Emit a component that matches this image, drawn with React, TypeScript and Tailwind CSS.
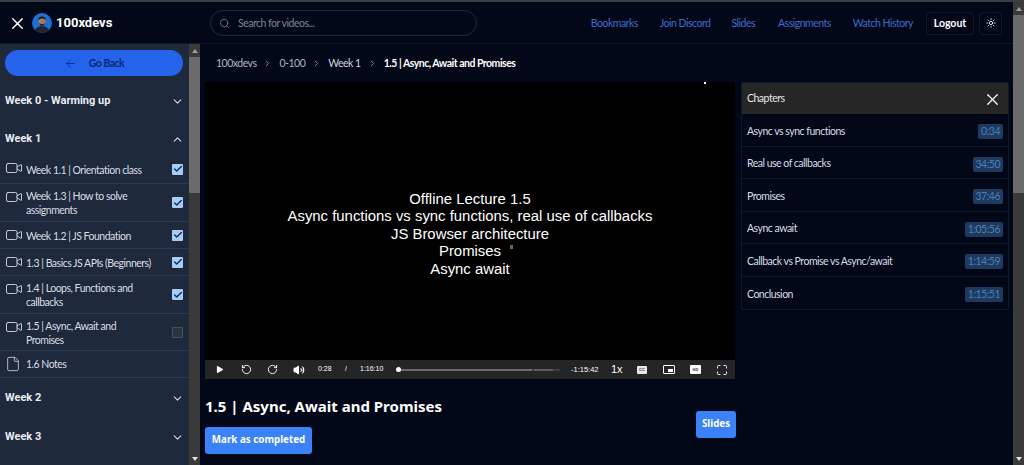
import { ArrowLeft, Check, ChevronDown, ChevronRight, ChevronUp, File, Maximize, Play, RotateCcw, RotateCw, Search, Sun, Video, Volume2, X } from 'lucide-react';

const lessons = [
  { title: 'Week 1.1 | Orientation class', done: true, h: 'h-[29px]' },
  { title: 'Week 1.3 | How to solve assignments', done: true, h: 'h-[38px]' },
  { title: 'Week 1.2 | JS Foundation', done: true, h: 'h-[27px]' },
  { title: '1.3 | Basics JS APIs (Beginners)', done: true, h: 'h-[27px]' },
  { title: '1.4 | Loops, Functions and callbacks', done: true, h: 'h-[38px]' },
  { title: '1.5 | Async, Await and Promises', done: false, h: 'h-[37px]' },
];

const chapters = [
  ['Async vs sync functions', '0:34'],
  ['Real use of callbacks', '34:50'],
  ['Promises', '37:46'],
  ['Async await', '1:05:56'],
  ['Callback vs Promise vs Async/await', '1:14:59'],
  ['Conclusion', '1:15:51'],
];

function Scrollbar({ thumb }: { thumb: string }) {
  return (
    <div className="w-[11px] shrink-0 bg-[#3a3a3a] flex flex-col items-center">
      <div className="h-[13px] flex items-center justify-center">
        <div className="w-0 h-0 border-x-[3px] border-x-transparent border-b-[4px] border-b-[#a0a0a0]" />
      </div>
      <div className={`w-full bg-[#6b6b6b] ${thumb}`} />
      <div className="flex-1" />
      <div className="h-[13px] flex items-center justify-center">
        <div className="w-0 h-0 border-x-[3px] border-x-transparent border-t-[4px] border-t-[#e0e0e0]" />
      </div>
    </div>
  );
}

function Avatar() {
  return (
    <svg width="20" height="20" viewBox="0 0 20 20" className="shrink-0">
      <defs>
        <clipPath id="av"><circle cx="10" cy="10" r="10" /></clipPath>
      </defs>
      <g clipPath="url(#av)">
        <rect width="20" height="20" fill="#1d6fd1" />
        <path d="M2 20c1-5 4-7 8-7s7 2 8 7z" fill="#1f2430" />
        <circle cx="10" cy="8" r="3.6" fill="#a9795c" />
        <path d="M6.3 7.4C6.3 4.6 8 3.6 10 3.6s3.7 1 3.7 3.8c-1-1.4-2-1.8-3.7-1.8s-2.7.4-3.7 1.8z" fill="#15171d" />
        <path d="M7.3 10c.5 2.4 1.5 3 2.7 3s2.2-.6 2.7-3c-.8.8-1.7 1-2.7 1s-1.9-.2-2.7-1z" fill="#2a2320" />
      </g>
    </svg>
  );
}

function WeekRow({ title, open, h = 'h-[38px] pt-[2px]' }: { title: string; open?: boolean; h?: string }) {
  const Icon = open ? ChevronUp : ChevronDown;
  return (
    <div className={`flex items-center justify-between pl-[5px] pr-[5px] ${h}`}>
      <span className="font-['Roboto',sans-serif] text-[11px] font-bold text-[#e8ecf2]">{title}</span>
      <Icon size={13} strokeWidth={2} className="text-[#d5dae2]" />
    </div>
  );
}

function Sidebar() {
  return (
    <aside className="w-[189px] shrink-0 bg-[#1e293b] flex flex-col overflow-hidden">
      <div className="px-[5px] pt-[6px] pb-[5px]">
        <div className="w-[178px] h-[26px] rounded-full bg-[#2563eb] flex items-center justify-center gap-[12px] text-[10.5px] tracking-[-0.5px] text-[#0b2a77] font-bold">
          <ArrowLeft size={13} strokeWidth={1.5} />
          <span className="pt-[1px]">Go Back</span>
        </div>
      </div>
      <WeekRow title="Week 0 - Warming up" />
      <WeekRow title="Week 1" open h="h-[36px] pt-[4px]" />
      <div className="flex flex-col">
        {lessons.map((l) => (
          <div key={l.title} className={`flex items-center border-b border-[#2c3a4e] pl-[5px] pr-[6px] ${l.h}`}>
            <Video size={18} strokeWidth={1.2} className="text-[#d5dae2] shrink-0 self-start mt-[4px]" />
            <span className="ml-[3px] flex-1 text-[10.5px] tracking-[-0.5px] leading-[14px] text-[#d8dde5] pr-[17px] pt-[1px]">{l.title}</span>
            <span className={`w-[11px] h-[11px] rounded-[1px] flex items-center justify-center shrink-0 ${l.done ? 'bg-[#a8cdf5]' : 'bg-[#2a3340] border border-[#4a4f58]'}`}>
              {l.done && <Check size={10} strokeWidth={3.5} className="text-[#14305e]" />}
            </span>
          </div>
        ))}
        <div className="flex items-center h-[27px] border-b border-[#2c3a4e] pl-[5px]">
          <File size={16} strokeWidth={1.2} className="text-[#d5dae2] shrink-0" />
          <span className="ml-[5px] text-[10.5px] tracking-[-0.5px] text-[#d8dde5] pt-[1px]">1.6 Notes</span>
        </div>
      </div>
      <WeekRow title="Week 2" h="h-[39px] pt-[2px]" />
      <WeekRow title="Week 3" />
    </aside>
  );
}

function Controls() {
  return (
    <div className="h-[19px] bg-[#232527] flex items-center text-white text-[7px] font-['Liberation_Sans',sans-serif]">
      <span className="w-[28px] flex justify-center"><Play size={9} fill="white" strokeWidth={0} /></span>
      <span className="w-[26px] flex justify-center"><RotateCcw size={11} strokeWidth={2} /></span>
      <span className="w-[26px] flex justify-center"><RotateCw size={11} strokeWidth={2} /></span>
      <span className="w-[28px] flex justify-center"><Volume2 size={12} strokeWidth={2} fill="white" /></span>
      <span className="ml-[5px] w-[14px]">0:28</span>
      <span className="ml-[12px] w-[4px] text-center">/</span>
      <span className="ml-[12px] w-[23px]">1:16:10</span>
      <div className="ml-[13px] w-[164px] h-[2px] bg-[#3c3f42] relative flex gap-[2px]">
        <div className="w-[136px] bg-[#6a6d70]" />
        <div className="w-[19px] bg-[#5a5d60]" />
        <div className="absolute left-0 -top-[1.5px] w-[5px] h-[5px] rounded-full bg-white" />
      </div>
      <span className="ml-[11px] w-[26px] text-[7.5px]">-1:15:42</span>
      <span className="ml-[14px] w-[15px] text-[11px]">1x</span>
      <span className="ml-[11px] w-[10px] h-[8px] bg-[#e8e8e8] rounded-[1px] text-[#333] text-[4px] font-bold flex items-center justify-center">CC</span>
      <span className="ml-[16px] w-[12px] h-[9px] border border-white rounded-[1px] flex items-end justify-end p-[1px]">
        <span className="w-[5px] h-[3px] bg-white" />
      </span>
      <span className="ml-[15px] w-[11px] h-[9px] bg-white rounded-[1px] text-[#333] text-[4px] font-bold flex items-center justify-center">HD</span>
      <span className="ml-[15px]"><Maximize size={12} strokeWidth={2} /></span>
    </div>
  );
}

function Player() {
  return (
    <div className="w-[530px] h-[297px] flex flex-col shrink-0">
      <div className="flex-1 bg-black relative flex items-center justify-center text-center text-white font-['Liberation_Sans',sans-serif] text-[14.9px] leading-[17.4px] pt-[27px]">
        <div>
          <div>Offline Lecture 1.5</div>
          <div>Async functions vs sync functions, real use of callbacks</div>
          <div>JS Browser architecture</div>
          <div>Promises</div>
          <div>Async await</div>
        </div>
        <div className="absolute left-[499px] top-0 w-[2px] h-[2px] bg-white" />
        <div className="absolute left-[305px] top-[163px] w-[3px] h-[4px] bg-[#666]" />
      </div>
      <Controls />
    </div>
  );
}

function Chapters() {
  return (
    <div className="w-[268px] shrink-0 rounded-[2px] border border-[#0f1a2c] overflow-hidden">
      <div className="h-[31px] bg-[#262626] flex items-center justify-between pl-[5px] pr-[6px] pt-[1px]">
        <span className="text-[10.5px] tracking-[-0.5px] text-[#e5e5e5]">Chapters</span>
        <X size={19} strokeWidth={1.5} className="text-white" />
      </div>
      {chapters.map(([name, time]) => (
        <div key={name} className="h-[32.5px] flex items-center justify-between pl-[5px] pr-[5px] pt-[4px] border-b border-[#0f1a2c] last:border-b-0">
          <span className="text-[10.5px] tracking-[-0.5px] text-[#d8dde5]">{name}</span>
          <span className="h-[15px] px-[3px] rounded-[2px] bg-[#1e3a5f] text-[#4b7fb8] text-[10.5px] tracking-[-0.5px] leading-[15px]">{time}</span>
        </div>
      ))}
    </div>
  );
}

export default function App() {
  return (
    <div className="h-screen w-screen overflow-hidden bg-[#020817] flex flex-col font-['Lato','Liberation_Sans',sans-serif]">
      <div className="h-[2px] shrink-0 bg-[#3a3d44]" />
      <div className="flex flex-1 min-h-0">
        <div className="flex-1 min-w-0 flex flex-col">
          <header className="h-[42px] shrink-0 border-b border-[#10192a] flex items-center pt-[1px]">
            <div className="w-[210px] shrink-0 flex items-center">
              <X size={19} strokeWidth={1.8} className="ml-[8px] text-white" />
              <span className="ml-[5px]"><Avatar /></span>
              <span className="ml-[4px] font-['Roboto',sans-serif] text-[13px] font-bold text-white">100xdevs</span>
            </div>
            <div className="w-[267px] h-[26px] rounded-full border border-[#1e293b] flex items-center pl-[8px]">
              <Search size={11} strokeWidth={1.5} className="text-[#8a93a3]" />
              <span className="ml-[8px] text-[10.5px] tracking-[-0.5px] text-[#7d8696] pt-[1px]">Search for videos...</span>
            </div>
            <nav className="ml-auto flex items-center text-[10.5px] tracking-[-0.5px] text-[#3f6ccf]">
              <span className="pt-[1px]">Bookmarks</span>
              <span className="ml-[22px] pt-[1px]">Join Discord</span>
              <span className="ml-[21px] pt-[1px]">Slides</span>
              <span className="ml-[23px] pt-[1px]">Assignments</span>
              <span className="ml-[22px] pt-[1px]">Watch History</span>
              <span className="ml-[13px] w-[48px] h-[23px] rounded-[4px] border border-[#10192a] flex items-center justify-center text-white font-bold tracking-normal pt-[1px]">Logout</span>
              <span className="ml-[5px] w-[23px] h-[23px] rounded-[4px] border border-[#10192a] flex items-center justify-center">
                <Sun size={10} strokeWidth={2} className="text-white" />
              </span>
            </nav>
            <div className="w-[11px]" />
          </header>
          <div className="flex-1 min-h-0 flex">
            <Sidebar />
            <Scrollbar thumb="h-[136px]" />
            <main className="flex-1 min-w-0 pl-[5px] pr-[4px] flex flex-col">
              <div className="h-[38px] shrink-0 flex items-center pl-[11px] pt-[1px] text-[10.5px] tracking-[-0.5px] text-[#aeb4bf]">
                <span>100xdevs</span>
                <ChevronRight size={9} className="mx-[7px]" />
                <span>0-100</span>
                <ChevronRight size={9} className="mx-[7px]" />
                <span className="text-[#d0d4da]">Week 1</span>
                <ChevronRight size={9} className="mx-[7px]" />
                <span className="text-white font-bold">1.5 | Async, Await and Promises</span>
              </div>
              <div className="flex gap-[6px] items-start">
                <Player />
                <Chapters />
              </div>
              <div className="w-[531px] flex items-start justify-between font-['Noto_Sans',sans-serif]">
                <div className="pt-[17px]">
                  <div className="text-[15px] leading-[20px] font-bold text-white">1.5 | Async, Await and Promises</div>
                  <div className="mt-[11px] w-[107px] h-[27px] rounded-[3px] bg-[#3b82f6] text-white text-[9.8px] font-bold flex items-center justify-center">Mark as completed</div>
                </div>
                <div className="mt-[32px] w-[40px] h-[27px] rounded-[3px] bg-[#3b82f6] text-white text-[9.8px] font-bold flex items-center justify-center">Slides</div>
              </div>
            </main>
          </div>
        </div>
        <Scrollbar thumb="h-[178px]" />
      </div>
    </div>
  );
}
